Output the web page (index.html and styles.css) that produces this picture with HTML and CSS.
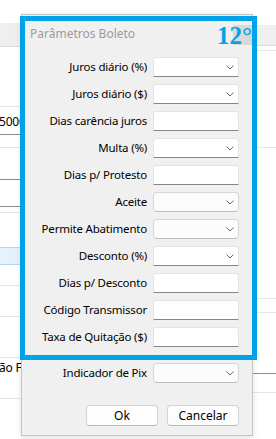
FILE: index.html
```html
<!DOCTYPE html>
<html lang="pt-BR">
<head>
    <meta charset="UTF-8">
    <title>Parâmetros Boleto</title>
    <link rel="stylesheet" href="styles.css">
</head>
<body>
<div class="screen">

    <!-- janela de fundo -->
    <div class="backdrop">
        <div class="strip strip-left">
            <div class="bg h23"></div>
            <div class="bg head h23"></div>
            <div class="bg soft h59"></div>
            <div class="bg field h27"><span class="cut">5000</span></div>
            <div class="bg soft h12"></div>
            <div class="bg dark h31"></div>
            <div class="bg dark h26"></div>
            <div class="bg soft h5"></div>
            <div class="bg h34"></div>
            <div class="bg selected h17"></div>
            <div class="bg soft h20"></div>
            <div class="bg soft h30"></div>
            <div class="bg soft h40"></div>
            <div class="bg h27"><span class="cut">ão Fi</span></div>
            <div class="bg soft h12"></div>
        </div>
        <div class="strip strip-right">
            <div class="bg h25"></div>
            <div class="bg head h20"></div>
            <div class="bg soft h4"></div>
            <div class="bg soft h96"></div>
            <div class="bg soft h150"></div>
            <div class="bg soft h13"></div>
            <div class="bg dark h60"></div>
            <div class="bg soft h18"></div>
        </div>
    </div>

    <!-- dialogo -->
    <div class="dialog">
        <div class="titlebar">
            <span class="title">Parâmetros Boleto</span>
            <span class="close"></span>
        </div>

        <div class="form">
            <label>Juros diário (%)</label>
            <div class="box edit"><svg class="chev" width="8" height="5" viewBox="0 0 8 5"><polyline points="0.5,0.5 4,4 7.5,0.5"/></svg></div>

            <label>Juros diário ($)</label>
            <div class="box edit"><svg class="chev" width="8" height="5" viewBox="0 0 8 5"><polyline points="0.5,0.5 4,4 7.5,0.5"/></svg></div>

            <label>Dias carência juros</label>
            <div class="box edit"></div>

            <label>Multa (%)</label>
            <div class="box edit"><svg class="chev" width="8" height="5" viewBox="0 0 8 5"><polyline points="0.5,0.5 4,4 7.5,0.5"/></svg></div>

            <label>Dias p/ Protesto</label>
            <div class="box edit"></div>

            <label>Aceite</label>
            <div class="box list"><svg class="chev" width="8" height="5" viewBox="0 0 8 5"><polyline points="0.5,0.5 4,4 7.5,0.5"/></svg></div>

            <label>Permite Abatimento</label>
            <div class="box list"><svg class="chev" width="8" height="5" viewBox="0 0 8 5"><polyline points="0.5,0.5 4,4 7.5,0.5"/></svg></div>

            <label>Desconto (%)</label>
            <div class="box edit"><svg class="chev" width="8" height="5" viewBox="0 0 8 5"><polyline points="0.5,0.5 4,4 7.5,0.5"/></svg></div>

            <label>Dias p/ Desconto</label>
            <div class="box edit"></div>

            <label>Código Transmissor</label>
            <div class="box edit"></div>

            <label>Taxa de Quitação ($)</label>
            <div class="box edit"></div>
        </div>

        <div class="form form-pix">
            <label>Indicador de Pix</label>
            <div class="box list"><svg class="chev" width="8" height="5" viewBox="0 0 8 5"><polyline points="0.5,0.5 4,4 7.5,0.5"/></svg></div>
        </div>

        <div class="actions">
            <button>Ok</button>
            <button>Cancelar</button>
        </div>
    </div>

    <!-- marcacao -->
    <div class="highlight">
        <span class="badge">12°</span>
    </div>
</div>
</body>
</html>
```

FILE: styles.css
```css
body {
    margin: 0;
    font-family: "Noto Sans", "Open Sans", sans-serif;
    font-size: 11.5px;
    letter-spacing: -0.2px;
    color: #000;
}
.screen {
    position: relative;
    width: 276px;
    height: 439px;
    overflow: hidden;
    background-color: #fff;
}

/* janela de fundo */
.backdrop {
    display: flex;
    justify-content: space-between;
    height: 100%;
}
.strip {
    display: flex;
    flex-direction: column;
}
.strip-left {
    width: 21px;
}
.strip-right {
    width: 23px;
}
.bg {
    flex: none;
    box-sizing: border-box;
    overflow: hidden;
    white-space: nowrap;
}
.bg.head {
    background-color: #efefef;
    border-bottom: 1px solid #dcdcdc;
}
.bg.soft {
    border-bottom: 1px solid #e6e6e6;
}
.bg.dark, .bg.field {
    border-bottom: 1px solid #8c8c8c;
}
.bg.selected {
    background-color: #e5f1fb;
    border-top: 1px solid #b9d8f2;
    border-bottom: 1px solid #b9d8f2;
}
.cut {
    display: block;
    margin-left: -1px;
    font-size: 12px;
    line-height: 30px;
}
.h4 { height: 5px; }
.h5 { height: 6px; }
.h12 { height: 13px; }
.h13 { height: 14px; }
.h17 { height: 18px; }
.h18 { height: 19px; }
.h20 { height: 21px; }
.h23 { height: 24px; }
.h25 { height: 25px; }
.h26 { height: 27px; }
.h27 { height: 28px; }
.h30 { height: 31px; }
.h31 { height: 32px; }
.h34 { height: 34px; }
.h40 { height: 41px; }
.h59 { height: 60px; }
.h60 { height: 61px; }
.h96 { height: 97px; }
.h150 { height: 151px; }
.strip-left .h23:first-child { height: 23px; }
.strip-left .h27:nth-last-child(2) .cut { line-height: 20px; }

/* dialogo */
.dialog {
    position: absolute;
    left: 21px;
    top: 14px;
    width: 232px;
    height: 422px;
    box-sizing: border-box;
    background-color: #f0f0f0;
    border: 1px solid #c4c4c4;
    box-shadow: 0 2px 6px rgba(0, 0, 0, 0.12);
}
.titlebar {
    display: flex;
    justify-content: space-between;
    align-items: center;
    height: 36px;
    padding-left: 8px;
}
.title {
    color: #9b9b9b;
    font-size: 12px;
    letter-spacing: 0;
}
.close {
    width: 19px;
    height: 20px;
    background-color: #d9d9d9;
    margin-top: 4px;
}
.form {
    display: grid;
    grid-template-columns: 120px 86px;
    grid-auto-rows: 20px;
    column-gap: 6px;
    row-gap: 7px;
    padding: 6px 0 0 5px;
}
.form label {
    text-align: right;
    line-height: 20px;
    white-space: nowrap;
}
.form-pix {
    padding-top: 16px;
}
.box {
    position: relative;
    box-sizing: border-box;
    background-color: #fff;
}
.box.edit {
    border: 1px solid #e4e4e4;
    border-bottom-color: #878787;
    border-radius: 3px 3px 0 0;
}
.box.list {
    background-color: #fcfcfc;
    border: 1px solid #d6d6d6;
    border-bottom-color: #bdbdbd;
    border-radius: 4px;
}
.chev {
    position: absolute;
    right: 4px;
    top: 7px;
}
.chev polyline {
    fill: none;
    stroke: #6a6a6a;
    stroke-width: 1;
}
.actions {
    display: flex;
    justify-content: flex-end;
    gap: 9px;
    padding: 22px 13px 0 0;
}
button {
    width: 72px;
    height: 21px;
    padding: 0;
    font-family: inherit;
    font-size: 12px;
    letter-spacing: 0;
    color: #000;
    background-color: #fdfdfd;
    border: 1px solid #d3d3d3;
    border-bottom-color: #b8b8b8;
    border-radius: 4px;
}

/* marcacao */
.highlight {
    position: absolute;
    left: 20px;
    top: 16px;
    width: 237px;
    height: 344px;
    box-sizing: border-box;
    border: 5px solid #00a2e8;
    display: flex;
    justify-content: flex-end;
    align-items: flex-start;
}
.badge {
    font-family: "Liberation Serif", serif;
    font-weight: bold;
    font-size: 25px;
    line-height: 25px;
    letter-spacing: 0;
    color: #00a2e8;
    margin-top: 2px;
}
```
